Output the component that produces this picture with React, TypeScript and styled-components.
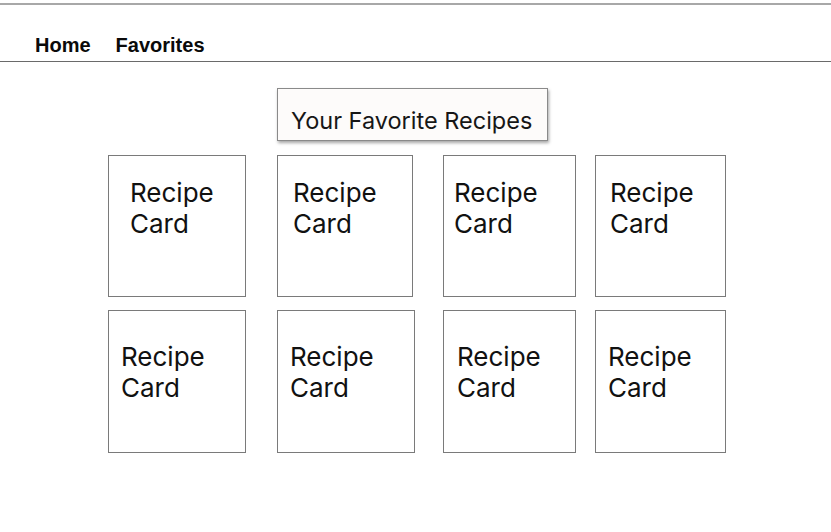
import React from "react";
import styled, { createGlobalStyle } from "styled-components";

const Global = createGlobalStyle`
  html, body { margin: 0; padding: 0; background: #ffffff; }
  body { font-family: Inter, "Noto Sans", sans-serif; color: #111; }
  * { box-sizing: border-box; }
`;

const Page = styled.div`
  width: 831px;
  min-height: 532px;
  background: #fff;
`;

const TopRule = styled.div`
  margin-top: 3px;
  height: 2px;
  background: #a8a8a8;
`;

const Nav = styled.nav`
  display: flex;
  gap: 25px;
  padding: 29px 0 4px 35px;
  border-bottom: 1px solid #6a6a6a;
`;

const NavLink = styled.a`
  font-family: "Liberation Sans", Arial, sans-serif;
  font-weight: 700;
  font-size: 20px;
  line-height: 23px;
  color: #0a0a0a;
  text-decoration: none;
`;

const TitleBox = styled.div`
  margin: 26px 0 0 277px;
  width: 271px;
  height: 53px;
  padding: 18px 0 0 13px;
  background: #fdfbfa;
  border: 1px solid #8a8a8a;
  box-shadow: 1px 2px 3px rgba(0, 0, 0, 0.35);
  font-size: 23.5px;
  line-height: 28px;
  color: #161616;
  white-space: nowrap;
`;

const Grid = styled.div`
  display: flex;
  flex-direction: column;
  gap: 13px;
  margin-top: 14px;
  padding-left: 108px;
`;

const Row = styled.div`
  display: flex;
`;

const Card = styled.div<{ $w: number; $h: number; $gap: number; $pl: number; $pt: number }>`
  width: ${(p) => p.$w}px;
  height: ${(p) => p.$h}px;
  margin-left: ${(p) => p.$gap}px;
  padding: ${(p) => p.$pt}px 0 0 ${(p) => p.$pl}px;
  border: 1px solid #7a7a7a;
  background: #fff;
  font-size: 26px;
  line-height: 31px;
  color: #111;
`;

type C = { w: number; gap: number; pl: number };

const rows: { h: number; pt: number; cards: C[] }[] = [
  {
    h: 142,
    pt: 21,
    cards: [
      { w: 138, gap: 0, pl: 21 },
      { w: 136, gap: 31, pl: 15 },
      { w: 133, gap: 30, pl: 10 },
      { w: 131, gap: 19, pl: 14 },
    ],
  },
  {
    h: 143,
    pt: 30,
    cards: [
      { w: 138, gap: 0, pl: 12 },
      { w: 138, gap: 31, pl: 12 },
      { w: 133, gap: 28, pl: 13 },
      { w: 131, gap: 19, pl: 12 },
    ],
  },
];

export default function App() {
  return (
    <Page>
      <Global />
      <TopRule />
      <Nav>
        <NavLink href="#">Home</NavLink>
        <NavLink href="#">Favorites</NavLink>
      </Nav>
      <TitleBox>Your Favorite Recipes</TitleBox>
      <Grid>
        {rows.map((r, i) => (
          <Row key={i}>
            {r.cards.map((c, j) => (
              <Card key={j} $w={c.w} $h={r.h} $gap={c.gap} $pl={c.pl} $pt={r.pt}>
                Recipe
                <br />
                Card
              </Card>
            ))}
          </Row>
        ))}
      </Grid>
    </Page>
  );
}
